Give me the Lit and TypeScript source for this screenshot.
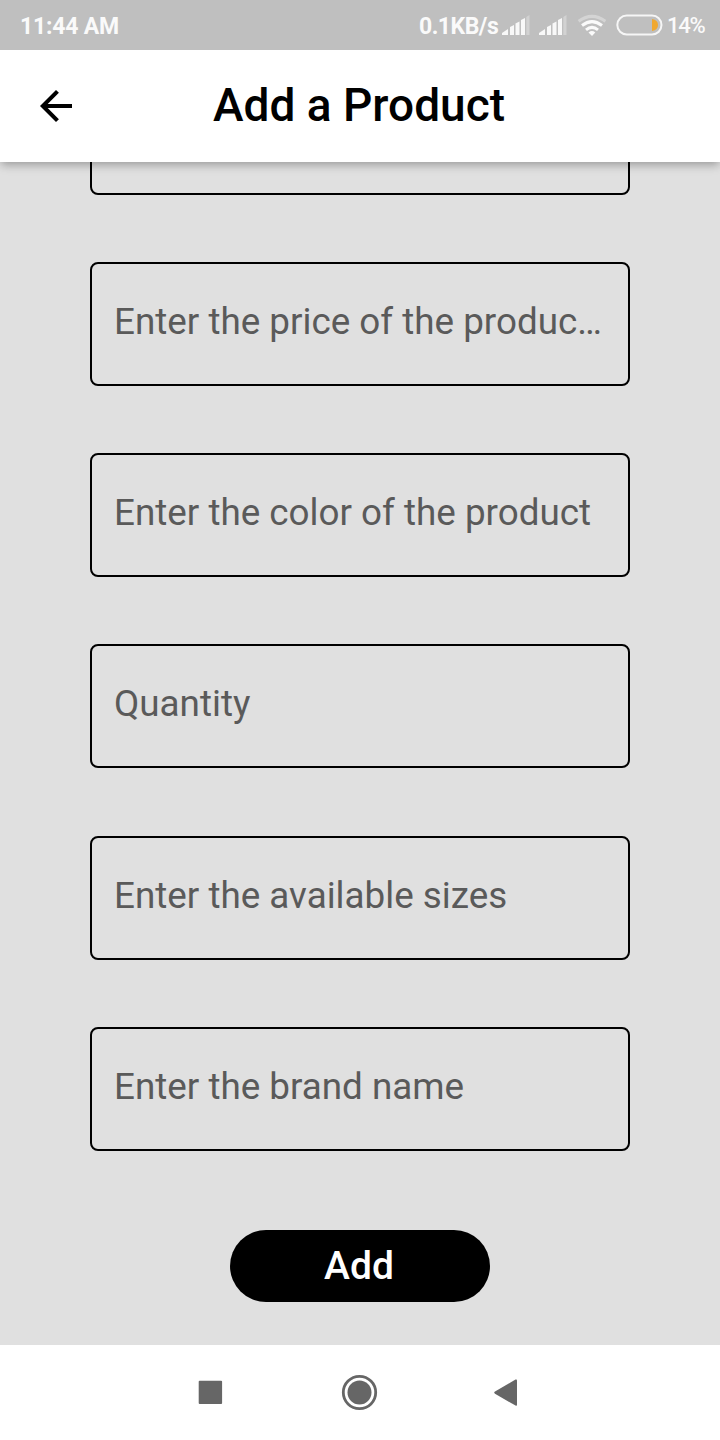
import { LitElement, html, css, svg } from "lit";
import { customElement, property } from "lit/decorators.js";

@customElement("status-bar")
class StatusBar extends LitElement {
  static styles = css`
    :host {
      display: block;
      height: 50px;
      flex: none;
      z-index: 2;
      background: #bfbfbf;
      color: #fafafa;
      font-family: Roboto, sans-serif;
    }
    .bar {
      height: 50px;
      display: flex;
      align-items: center;
      padding: 0 13px 0 20px;
      box-sizing: border-box;
      line-height: 28px;
      white-space: nowrap;
    }
    .time {
      font-size: 23px;
      letter-spacing: -0.2px;
      font-weight: 700;
      padding-top: 3px;
      flex: 1;
    }
    .speed {
      font-size: 23px;
      letter-spacing: -0.5px;
      font-weight: 700;
      padding-top: 3px;
      width: 83px;
    }
    .battery {
      font-size: 22px;
      letter-spacing: -1.2px;
      font-weight: 500;
      width: 39px;
      padding-top: 1px;
      margin-left: -1px;
      margin-right: 1px;
    }
    .glyphs {
      display: block;
      width: 166px;
      height: 50px;
    }
  `;

  private signal(x: number) {
    return svg`<g transform="translate(${x} 0)">
      <path d="M0 35V33L6 29V35Z M8 35V27L12 25V35Z M13.5 35V23.5L17.5 21.5V35Z M19 35V20L23 18V35Z" fill="#f8f8f8"/>
      <path d="M24.3 35V17L27.5 15V35Z" fill="#d2d2d2"/>
    </g>`;
  }

  render() {
    return html`<div class="bar">
      <span class="time">11:44 AM</span>
      <span class="speed">0.1KB/s</span>
      <svg class="glyphs" viewBox="502 0 166 50">
        ${this.signal(502)} ${this.signal(539)}
        <g fill="none" stroke-width="3">
          <path d="M578.6 21.2Q592 11.5 605.4 21.2" stroke="#d4d4d4" />
          <path d="M582 25.5Q592 17.7 602 25.5" stroke="#fafafa" />
          <path d="M586 29.8Q592 25 598 29.8" stroke="#fafafa" />
        </g>
        <path d="M588.5 32.5Q592 29.6 595.3 32.5L592 36Z" fill="#fafafa" />
        <rect x="617.3" y="15.5" width="44.2" height="19" rx="9.5" fill="none" stroke="#f6f6f6" stroke-width="2" />
        <path d="M652 19Q658 20 658 25T652 31Z" fill="#f0a830" />
      </svg>
      <span class="battery">14%</span>
    </div>`;
  }
}

@customElement("product-field")
class ProductField extends LitElement {
  @property() hint = "";

  static styles = css`
    :host {
      display: block;
      flex: none;
    }
    .input {
      display: block;
      width: 540px;
      height: 124px;
      box-sizing: border-box;
      margin: 0;
      padding: 0 22px 5.2px;
      border: 2px solid #000;
      border-radius: 8px;
      background: transparent;
      font: 400 36.8px Roboto, sans-serif;
      text-overflow: ellipsis;
      outline: none;
    }
    .input::placeholder {
      color: #5a5a5a;
      opacity: 1;
    }
  `;

  render() {
    return html`<input class="input" placeholder=${this.hint} />`;
  }
}

@customElement("app-root")
class AppRoot extends LitElement {
  static styles = css`
    :host {
      display: flex;
      flex-direction: column;
      width: 720px;
      height: 1440px;
      overflow: hidden;
      background: #e0e0e0;
      font-family: Roboto, sans-serif;
    }
    .header {
      flex: none;
      height: 112px;
      display: grid;
      grid-template-columns: 112px 1fr 112px;
      align-items: center;
      background: #fff;
      box-shadow: 0 4px 10px rgba(0, 0, 0, 0.12), 0 4px 8px -2px rgba(0, 0, 0, 0.22);
      z-index: 1;
    }
    .back {
      display: block;
      width: 112px;
      height: 112px;
    }
    .title {
      margin: 0;
      padding: 0 2px 2px 0;
      font-size: 46px;
      font-weight: 500;
      line-height: 56px;
      text-align: center;
      white-space: nowrap;
      color: #000;
    }
    .content {
      flex: 1;
      min-height: 0;
      overflow: hidden;
      display: flex;
      flex-direction: column;
      justify-content: flex-end;
      align-items: center;
      padding-bottom: 43px;
    }
    .form {
      display: flex;
      flex-direction: column;
      gap: 67.3px;
    }
    .add {
      flex: none;
      width: 260px;
      height: 72px;
      margin-top: 79px;
      padding: 0 2px 0 0;
      border: 0;
      border-radius: 36px;
      background: #000;
      color: #fff;
      font: 500 39px/72px Roboto, sans-serif;
    }
    .nav {
      flex: none;
      height: 95px;
      background: #fff;
    }
    .keys {
      display: block;
      width: 720px;
      height: 95px;
    }
  `;

  private hints = [
    "",
    "Enter the price of the produc…",
    "Enter the color of the product",
    "Quantity",
    "Enter the available sizes",
    "Enter the brand name",
  ];

  render() {
    return html`
      <status-bar></status-bar>
      <header class="header">
        <svg class="back" viewBox="0 50 112 112">
          <path d="M72 104V108H47.7L58.9 119.2L56 122L40 106L56 90L58.9 92.8L47.7 104Z" fill="#000" />
        </svg>
        <h1 class="title">Add a Product</h1>
      </header>
      <main class="content">
        <div class="form">${this.hints.map((h) => html`<product-field .hint=${h}></product-field>`)}</div>
        <button class="add">Add</button>
      </main>
      <nav class="nav">
        <svg class="keys" viewBox="0 1345 720 95" fill="#666">
          <rect x="198.7" y="1380.7" width="23.4" height="23.2" rx="1" />
          <circle cx="359.5" cy="1392.5" r="16.2" fill="none" stroke="#666" stroke-width="2.8" />
          <circle cx="359.5" cy="1392.5" r="12" />
          <path d="M515.5 1379.6Q517 1379 517 1380.5V1404.7Q517 1406.3 515.5 1405.6L495 1393.8Q493.4 1392.6 495 1391.4Z" />
        </svg>
      </nav>
    `;
  }
}
